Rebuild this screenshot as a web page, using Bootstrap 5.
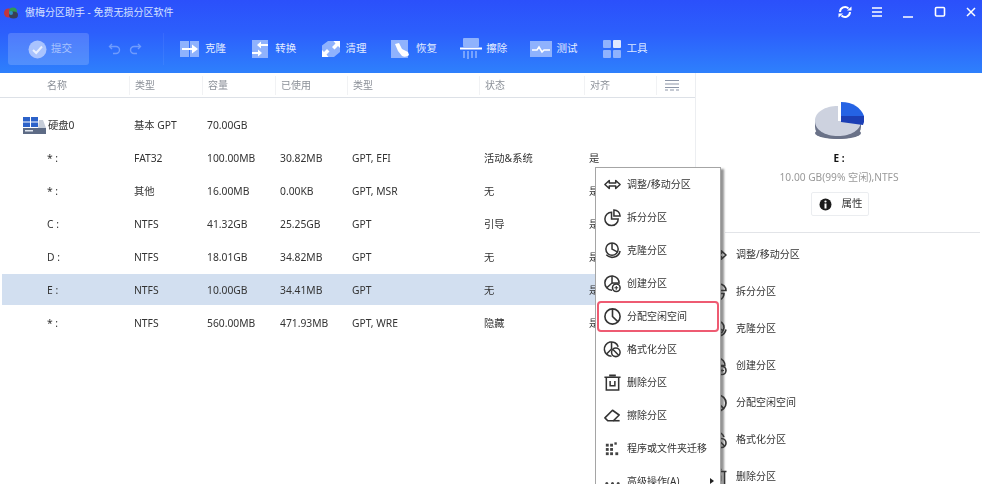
<!DOCTYPE html>
<html lang="zh">
<head>
<meta charset="utf-8">
<link href="https://cdn.jsdelivr.net/npm/bootstrap@5.3.0/dist/css/bootstrap.min.css" rel="stylesheet">
<style>
html,body{margin:0;height:484px;overflow:hidden;background:#fff}
body{font-family:"Noto Sans","Noto Sans CJK SC",sans-serif;font-size:10.3px;color:#333}
.app-shell{width:982px;height:484px;position:relative;overflow:hidden;filter:blur(.3px)}
.head-area{height:73px;background:linear-gradient(180deg,#2b50fb 0%,#2c5ffc 45%,#2e80fc 100%);color:#fff}
.title-line{height:24px;padding-left:4px}
.app-title{margin-left:7px;font-size:10px;color:#d5e0ff}
.win-ctl{margin-left:auto;padding-right:4px}
.win-ctl svg{width:14px;height:14px;margin-left:17.4px;display:block}
.tool-line{height:49px;padding:9px 0 0 8px}
.commit-box{width:81px;height:32px;background:rgba(255,255,255,.17);border-radius:3px;color:#a9c3fe;padding-left:20px;gap:4px;font-size:10.5px}
.undo-set{width:75px;padding-left:19px;gap:6px;border-right:1px solid rgba(255,255,255,.06);height:32px}
.tool-group{margin-left:15px}
.tool-entry{width:70.3px;font-size:10.5px;color:#e4edff;height:32px}
.tool-pic{width:26px;height:24px;flex:none}
.tool-pic svg{width:24px;height:24px;display:block}
.work-area{height:411px}
.left-pane{width:695px;flex:none}
.grid-line{display:grid;grid-template-columns:129px 73px 73px 72px 132px 105px 72px 39px}
.head-line{height:25px;border-bottom:1px solid #dde1e7;color:#8b9098;font-size:10px;align-items:center}
.head-line>span{padding-left:5px;border-left:1px solid #f1f2f4;height:19px;line-height:19px;white-space:nowrap}
.head-line>span:first-child{padding-left:47px;border-left:0}
.list-glyph{width:14px;height:12px;margin-left:3px}
.table-rows{padding-top:11px}
.data-line{height:33px;align-items:center;white-space:nowrap}
.data-line>span{padding-left:5px}
.data-line>span:first-child{padding-left:47px;display:flex;align-items:center}
.disk-name{margin-left:-24px}
.disk-name svg{width:23px;height:19px;margin-right:2px;flex:none}
.picked-line{background:linear-gradient(#d2dff0 0 31px,#fff 31px);margin-left:2px;grid-template-columns:127px 73px 73px 72px 132px 105px 72px 39px}
.picked-line>span:first-child{padding-left:45px}
.right-pane{flex:1;border-left:1px solid #eceef1;text-align:center}
.pie-pic{width:52px;height:40px;display:block;margin:27px auto 0}
.vol-name{font-weight:700;color:#111;font-size:10px;margin-top:10px;line-height:16px}
.vol-info{color:#999;font-size:10.2px;line-height:16px;margin-top:3px}
.prop-btn{width:58px;height:24px;margin:7px 0 0 1px;padding:0;border:1px solid #ebedf0;color:#333;border-radius:2px;gap:8px;--bs-btn-font-size:10.5px}
.prop-btn svg{width:17px;height:17px}
.pane-rule{margin:16px 2px 3px 29px;border:0;border-top:1px solid #e2e4e8;opacity:1}
.pane-actions{padding-left:12px;text-align:left}
.pane-action{height:37px;gap:8px;font-size:10px}
.pane-action svg{width:20px;height:20px;flex:none}
.context-box.dropdown-menu{left:595px;top:167px;width:126px;height:340px;padding:0;margin:0;border:1px solid #a5a5a5;border-radius:0;box-shadow:3px 2px 2px rgba(60,60,60,.55);--bs-dropdown-min-width:0}
.context-box .dropdown-item{height:33px;padding:0 0 0 7px;gap:5px;font-size:10px;color:#333;position:relative}
.context-box svg{width:19px;height:19px;flex:none}
.hot-entry{outline:2.5px solid #ee5b72;outline-offset:-3px;border-radius:5px}
.sub-tip{position:absolute;right:6px;top:13px;width:0;height:0;border-left:4px solid #222;border-top:3.5px solid transparent;border-bottom:3.5px solid transparent}
</style>
</head>
<body>
<svg width="0" height="0" class="position-absolute">
<defs>
<g id="i-move" fill="none" stroke="#333" stroke-width="1.6" stroke-linejoin="round"><path d="M2 10l4.6-4.2v2.6h6.8V5.8L18 10l-4.6 4.2v-2.6H6.6v2.6z"/></g>
<g id="i-split" fill="none" stroke="#333" stroke-width="1.6"><path d="M9 4.5a7 7 0 1 0 7 7H9z"/><path d="M11.5 2a6.5 6.5 0 0 1 6.5 6.5h-6.5z"/></g>
<g id="i-clone" fill="none" stroke="#333" stroke-width="1.6"><circle cx="9.5" cy="8.5" r="6.5"/><path d="M9.5 2v6.5l5.5 3"/><path d="M3.5 14.5a8.5 8.5 0 0 0 14.5-4"/></g>
<g id="i-create" fill="none" stroke="#333" stroke-width="1.6"><path d="M9.5 17a7.5 7.5 0 1 1 7.4-6.5"/><path d="M9.5 2v7.5l-5.5 5"/><path d="M9.5 9.5h7"/><circle cx="14" cy="14.5" r="4"/><path d="M14 12.5v4M12 14.5h4" stroke-width="1.2"/></g>
<g id="i-alloc" fill="none" stroke="#333" stroke-width="1.7"><circle cx="10" cy="10" r="8"/><path d="M10 2v8l5.6 5.4"/></g>
<g id="i-format" fill="none" stroke="#333" stroke-width="1.6"><path d="M9 17a7.5 7.5 0 1 1 7-10"/><path d="M9 2v7.5L4 14.5"/><circle cx="13.5" cy="13" r="4.5"/><path d="M10.5 10l6 6"/></g>
<g id="i-del" fill="none" stroke="#333" stroke-width="1.6"><path d="M1.500 4.500h17M6.500 2.500h7M3.500 4.500V18h13V4.500"/><path d="M7.500 8.500v5h5v-5"/></g>
<g id="i-erase" fill="none" stroke="#333" stroke-width="1.7" stroke-linejoin="round"><path d="M2 12.500l8-8 7 5-6 6H5z"/><path d="M11 15.500h6.500"/></g>
<g id="i-moveapp" fill="#444"><rect x="3" y="5" width="3" height="3"/><rect x="7.500" y="5" width="3" height="3"/><rect x="12" y="3.500" width="2.500" height="2.500"/><rect x="3" y="9.500" width="3" height="3"/><rect x="7.500" y="9.500" width="3" height="3"/><rect x="3" y="14" width="3" height="3"/><rect x="7.500" y="14" width="3" height="3"/><rect x="13" y="14" width="3" height="3"/></g>
<g id="i-more" fill="#444"><circle cx="4" cy="12" r="1.600"/><circle cx="10" cy="12" r="1.600"/><circle cx="16" cy="12" r="1.600"/></g>
</defs>
</svg>

<div class="app-shell">
  <header class="head-area">
    <div class="title-line d-flex align-items-center">
      <svg width="14" height="13" viewBox="0 0 14 13"><ellipse cx="4.500" cy="7" rx="4.500" ry="4.500" fill="#c2363f"/><ellipse cx="9" cy="5.500" rx="4" ry="4" fill="#2f9a56"/><ellipse cx="9.500" cy="9" rx="4.500" ry="3.500" fill="#3a3f55"/><ellipse cx="7" cy="7" rx="2" ry="2" fill="#2c8fc0"/></svg>
      <span class="app-title">傲梅分区助手 - 免费无损分区软件</span>
      <div class="win-ctl d-flex align-items-center">
        <svg viewBox="0 0 14 14" fill="none" stroke="#fff" stroke-width="2"><path d="M2 7a5 5 0 0 1 8.500-3.500M12 7a5 5 0 0 1-8.500 3.500"/><path d="M9 5.500h4.500V1.500z M5 8.500H.5v4z" fill="#fff" stroke="none"/></svg>
        <svg viewBox="0 0 14 14" fill="none" stroke="#fff" stroke-width="1.500"><path d="M2 3h10M2 7h10M2 11h10"/></svg>
        <svg viewBox="0 0 14 14" fill="none" stroke="#fff" stroke-width="1.500"><path d="M2 12h10"/></svg>
        <svg viewBox="0 0 14 14" fill="none" stroke="#fff" stroke-width="1.600"><rect x="2.500" y="2.500" width="9" height="8.500" rx="1"/></svg>
        <svg viewBox="0 0 14 14" fill="none" stroke="#fff" stroke-width="1.500"><path d="M3 3l8 8M11 3l-8 8"/></svg>
      </div>
    </div>
    <div class="tool-line d-flex align-items-start">
      <div class="commit-box d-flex align-items-center">
        <svg width="19" height="19" viewBox="0 0 19 19"><circle cx="9.500" cy="9.500" r="9" fill="#a9c3fe"/><path d="M5 10l3.200 3L14 6.500" fill="none" stroke="#e8efff" stroke-width="2"/></svg>
        <span>提交</span>
      </div>
      <div class="undo-set d-flex align-items-center">
        <svg width="14" height="12" viewBox="0 0 14 12" fill="none" stroke="#6f9bfd" stroke-width="1.400"><path d="M4 1L1.500 3.500 4 6"/><path d="M2 3.500h6a3.500 3.500 0 0 1 0 7H5"/></svg>
        <svg width="14" height="12" viewBox="0 0 14 12" fill="none" stroke="#6f9bfd" stroke-width="1.400"><path d="M10 1l2.500 2.500L10 6"/><path d="M12 3.500H6a3.500 3.500 0 0 0 0 7h3"/></svg>
      </div>
      <div class="d-flex tool-group">
      <div class="tool-entry d-flex align-items-center">
        <div class="tool-pic"><svg viewBox="0 0 24 24"><rect x="1" y="4" width="9" height="16" fill="#8fb2fd"/><rect x="11" y="4" width="9" height="16" fill="#8fb2fd"/><path d="M3 11h10V7.500l6 4.500-6 4.500V13H3z" fill="#fff"/></svg></div><span>克隆</span>
      </div>
      <div class="tool-entry d-flex align-items-center">
        <div class="tool-pic"><svg viewBox="0 0 24 24"><rect x="3" y="3" width="16" height="18" fill="#8fb2fd"/><path d="M19 7h-7V4.500L8 8l4 3.500V9h7z" fill="#fff"/><path d="M3 15h6v-2.500l4 3.500-4 3.500V17H3z" fill="#fff"/></svg></div><span>转换</span>
      </div>
      <div class="tool-entry d-flex align-items-center">
        <div class="tool-pic"><svg viewBox="0 0 24 24"><path d="M2 20V8.500L8 4h12v11l-6 5z" fill="#8fb2fd"/><path d="M2 20v-7l2 2 3-3 2.500 2.500-3 3 2 2.500zM20 4v7l-2-2-3.500 3.500L12 10l3.500-3.500-2-2.500z" fill="#fff"/></svg></div><span>清理</span>
      </div>
      <div class="tool-entry d-flex align-items-center">
        <div class="tool-pic"><svg viewBox="0 0 24 24"><rect x="1" y="3" width="17" height="18" fill="#8fb2fd"/><path d="M5 7l4-1 3 6 6 3 1 3c-2 2-5 2-7 1l-4-5z" fill="#fff"/></svg></div><span>恢复</span>
      </div>
      <div class="tool-entry d-flex align-items-center">
        <div class="tool-pic"><svg viewBox="0 0 24 24"><rect x="3" y="1" width="16" height="9" rx="1" fill="#8fb2fd"/><rect y="10.500" x="0" width="22" height="2" fill="#fff"/><path d="M4 14v7M8 14v8M12 14v7M16 14v7" stroke="#a9c5fd" stroke-width="1.200"/></svg></div><span>擦除</span>
      </div>
      <div class="tool-entry d-flex align-items-center">
        <div class="tool-pic"><svg viewBox="0 0 24 24"><rect x="0" y="4" width="22" height="16" fill="#8fb2fd"/><path d="M2 13h5l2-3 3 5 2-2h6" fill="none" stroke="#fff" stroke-width="1.500"/></svg></div><span>测试</span>
      </div>
      <div class="tool-entry d-flex align-items-center">
        <div class="tool-pic"><svg viewBox="0 0 24 24"><rect x="2" y="3" width="8" height="8" rx="1" fill="#8fb2fd"/><rect x="12" y="3" width="8" height="8" rx="1" fill="#e0e9ff"/><rect x="2" y="13" width="8" height="8" rx="1" fill="#8fb2fd"/><rect x="12" y="13" width="8" height="8" rx="1" fill="#8fb2fd"/></svg></div><span>工具</span>
      </div>
      </div>
    </div>
  </header>

  <main class="work-area d-flex">
    <section class="left-pane">
      <div class="grid-line head-line">
        <span>名称</span><span>类型</span><span>容量</span><span>已使用</span><span>类型</span><span>状态</span><span>对齐</span>
        <span class="d-flex align-items-center"><svg class="list-glyph" viewBox="0 0 14 12" fill="none" stroke="#8d96a8" stroke-width="1.200"><path d="M0 1.500h14M0 5h14"/><path d="M0 8.500h14M0 11h3M5 11h4M11 11h3" stroke-width="1"/></svg></span>
      </div>
      <div class="table-rows">
        <div class="grid-line data-line">
          <span><span class="disk-name d-flex align-items-center"><svg viewBox="0 0 23 19"><rect x="0" y="1" width="7" height="4.500" fill="#2c62c9"/><rect x="8" y="1" width="7" height="4.500" fill="#2c62c9"/><rect x="0" y="6.500" width="7" height="4.500" fill="#2c62c9"/><rect x="8" y="6.500" width="7" height="4.500" fill="#2c62c9"/><path d="M16 4h4l3 8v1H15z" fill="#c6cdd8"/><rect x="0" y="12" width="23" height="6" fill="#5d6b85"/><rect x="2" y="14" width="8" height="1.500" fill="#dfe5ee"/></svg>硬盘0</span></span>
          <span>基本 GPT</span><span>70.00GB</span><span></span><span></span><span></span><span></span><span></span>
        </div>
        <div class="grid-line data-line"><span>* :</span><span>FAT32</span><span>100.00MB</span><span>30.82MB</span><span>GPT, EFI</span><span>活动&amp;系统</span><span>是</span><span></span></div>
        <div class="grid-line data-line"><span>* :</span><span>其他</span><span>16.00MB</span><span>0.00KB</span><span>GPT, MSR</span><span>无</span><span>是</span><span></span></div>
        <div class="grid-line data-line"><span>C :</span><span>NTFS</span><span>41.32GB</span><span>25.25GB</span><span>GPT</span><span>引导</span><span>是</span><span></span></div>
        <div class="grid-line data-line"><span>D :</span><span>NTFS</span><span>18.01GB</span><span>34.82MB</span><span>GPT</span><span>无</span><span>是</span><span></span></div>
        <div class="grid-line data-line picked-line"><span>E :</span><span>NTFS</span><span>10.00GB</span><span>34.41MB</span><span>GPT</span><span>无</span><span>是</span><span></span></div>
        <div class="grid-line data-line"><span>* :</span><span>NTFS</span><span>560.00MB</span><span>471.93MB</span><span>GPT, WRE</span><span>隐藏</span><span>是</span><span></span></div>
      </div>
    </section>

    <aside class="right-pane">
      <svg class="pie-pic" viewBox="0 0 52 40">
        <path d="M2 21v6c0 8 10 12 23 12s23-4 23-12v-6z" fill="#6a7288"/>
        <ellipse cx="25" cy="33" rx="23" ry="6" fill="#6a7288"/>
        <path d="M25 21V6C12 6 2 12 2 21s10 15 23 15 23-6 23-15z" fill="#cdd2df"/>
        <path d="M28 2c12 0 20 6 23 14v6H28z" fill="#2563e4"/>
        <path d="M28 16h23v6l-1 3-22-3z" fill="#1c3fb5"/>
      </svg>
      <div class="vol-name">E :</div>
      <div class="vol-info">10.00 GB(99% 空闲),NTFS</div>
      <button type="button" class="btn prop-btn d-inline-flex align-items-center justify-content-center">
        <svg viewBox="0 0 17 17"><circle cx="8.500" cy="8.500" r="6" fill="#1b1b1b"/><circle cx="8.500" cy="5.500" r="1.100" fill="#fff"/><rect x="7.500" y="7.500" width="2" height="5" fill="#fff"/></svg><span>属性</span>
      </button>
      <hr class="pane-rule">
      <div class="pane-actions">
        <div class="pane-action d-flex align-items-center"><svg viewBox="0 0 20 20"><use href="#i-move"/></svg><span>调整/移动分区</span></div>
        <div class="pane-action d-flex align-items-center"><svg viewBox="0 0 20 20"><use href="#i-split"/></svg><span>拆分分区</span></div>
        <div class="pane-action d-flex align-items-center"><svg viewBox="0 0 20 20"><use href="#i-clone"/></svg><span>克隆分区</span></div>
        <div class="pane-action d-flex align-items-center"><svg viewBox="0 0 20 20"><use href="#i-create"/></svg><span>创建分区</span></div>
        <div class="pane-action d-flex align-items-center"><svg viewBox="0 0 20 20"><use href="#i-alloc"/></svg><span>分配空闲空间</span></div>
        <div class="pane-action d-flex align-items-center"><svg viewBox="0 0 20 20"><use href="#i-format"/></svg><span>格式化分区</span></div>
        <div class="pane-action d-flex align-items-center"><svg viewBox="0 0 20 20"><use href="#i-del"/></svg><span>删除分区</span></div>
      </div>
    </aside>
  </main>

  <div class="dropdown-menu show context-box">
    <a class="dropdown-item d-flex align-items-center" href="#"><svg viewBox="0 0 20 20"><use href="#i-move"/></svg>调整/移动分区</a>
    <a class="dropdown-item d-flex align-items-center" href="#"><svg viewBox="0 0 20 20"><use href="#i-split"/></svg>拆分分区</a>
    <a class="dropdown-item d-flex align-items-center" href="#"><svg viewBox="0 0 20 20"><use href="#i-clone"/></svg>克隆分区</a>
    <a class="dropdown-item d-flex align-items-center" href="#"><svg viewBox="0 0 20 20"><use href="#i-create"/></svg>创建分区</a>
    <a class="dropdown-item d-flex align-items-center hot-entry" href="#"><svg viewBox="0 0 20 20"><use href="#i-alloc"/></svg>分配空闲空间</a>
    <a class="dropdown-item d-flex align-items-center" href="#"><svg viewBox="0 0 20 20"><use href="#i-format"/></svg>格式化分区</a>
    <a class="dropdown-item d-flex align-items-center" href="#"><svg viewBox="0 0 20 20"><use href="#i-del"/></svg>删除分区</a>
    <a class="dropdown-item d-flex align-items-center" href="#"><svg viewBox="0 0 20 20"><use href="#i-erase"/></svg>擦除分区</a>
    <a class="dropdown-item d-flex align-items-center" href="#"><svg viewBox="0 0 20 20"><use href="#i-moveapp"/></svg>程序或文件夹迁移</a>
    <a class="dropdown-item d-flex align-items-center" href="#"><svg viewBox="0 0 20 20"><use href="#i-more"/></svg>高级操作(A)<span class="sub-tip"></span></a>
  </div>
</div>
<script src="https://cdn.jsdelivr.net/npm/bootstrap@5.3.0/dist/js/bootstrap.bundle.min.js"></script>
</body>
</html>
